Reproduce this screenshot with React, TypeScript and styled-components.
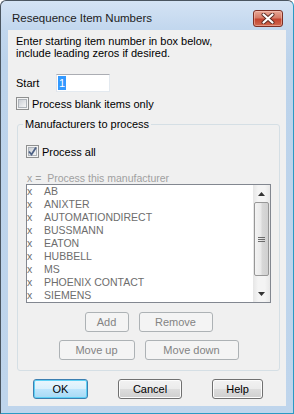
import React from 'react';
import styled, { createGlobalStyle } from 'styled-components';

const GlobalStyle = createGlobalStyle`
  html, body {
    margin: 0;
    padding: 0;
    background: #ffffff;
  }
  body {
    font-family: "Liberation Sans", Arial, sans-serif;
    font-size: 11px;
    color: #000;
  }
`;

const manufacturers = [
  'AB',
  'ANIXTER',
  'AUTOMATIONDIRECT',
  'BUSSMANN',
  'EATON',
  'HUBBELL',
  'MS',
  'PHOENIX CONTACT',
  'SIEMENS',
];

const Window = styled.div`
  box-sizing: border-box;
  width: 294px;
  height: 414px;
  display: flex;
  flex-direction: column;
  border: 1px solid;
  border-color: #4a5560 #2a9ac4 #2a9ac4 #4a5560;
  border-radius: 6px 6px 0 0;
  background: linear-gradient(#d4e3f4, #c2d7ee 28px, #bcd3eb 60px, #bfd5ec);
`;

const TitleBar = styled.div`
  display: flex;
  align-items: flex-start;
  justify-content: space-between;
  height: 29px;
  box-sizing: border-box;
  padding: 9px 10px 0 11px;
`;

const Title = styled.span`
  font-size: 11.5px;
  line-height: 17px;
  color: #1c1c1c;
`;

const CloseButton = styled.div`
  box-sizing: border-box;
  width: 30px;
  height: 17px;
  display: flex;
  align-items: center;
  justify-content: center;
  border: 1px solid #7c2f25;
  border-radius: 3px;
  background: linear-gradient(#e9a897, #d67b67 45%, #c4432f 55%, #d06a50);
  box-shadow: inset 0 0 0 1px rgba(255, 210, 200, 0.45);
`;

const Client = styled.div`
  flex: 1;
  margin: 0 7px 7px 7px;
  display: flex;
  flex-direction: column;
  padding: 5px 6px 0 8px;
  background: #f0f0f0;
`;

const Intro = styled.div`
  line-height: 12px;
`;

const StartRow = styled.div`
  display: flex;
  align-items: center;
  margin-top: 15px;
`;

const Label = styled.span`
  width: 40px;
`;

const TextBox = styled.div`
  box-sizing: border-box;
  width: 54px;
  height: 18px;
  display: flex;
  align-items: center;
  padding-left: 1px;
  background: #fff;
  border: 1px solid;
  border-color: #abadb3 #e3e9ef #e3e9ef #e2e3ea;
`;

const Selected = styled.span`
  background: #3399ff;
  color: #fff;
  line-height: 14px;
  padding: 0 1px;
`;

const CheckRow = styled.label<{ $top: number }>`
  display: flex;
  align-items: center;
  gap: 3px;
  margin-top: ${(p) => p.$top}px;
  height: 13px;
  font-size: 11px;
`;

const Box = styled.span`
  box-sizing: border-box;
  width: 13px;
  height: 13px;
  border: 1px solid #8e8f8f;
  background: #f4f4f4;
  padding: 1px;
  display: flex;
`;

const BoxInner = styled.span`
  flex: 1;
  position: relative;
  border: 1px solid #aeb3b9;
  background: linear-gradient(135deg, #cbcfd5, #f6f6f6);
`;

const Tick = styled.svg`
  position: absolute;
  left: -2px;
  top: -2px;
`;

const Group = styled.fieldset`
  margin: 8px 0 0 1px;
  padding: 0 0 10px 8px;
  border: 1px solid #d5dfe5;
  border-radius: 3px;
  display: flex;
  flex-direction: column;
  min-width: 0;
`;

const Legend = styled.legend`
  margin-left: -3px;
  padding: 0 2px;
  line-height: 12px;
  font-size: 11px;
`;

const ListCaption = styled.div`
  margin-top: 14px;
  line-height: 12px;
  color: #a0a0a0;
  font-size: 10.5px;
  padding-left: 1px;
  white-space: pre;
`;

const ListBox = styled.div`
  box-sizing: border-box;
  width: 245px;
  height: 119px;
  display: flex;
  background: #fff;
  border: 1px solid #828790;
`;

const Items = styled.div`
  flex: 1;
  display: flex;
  flex-direction: column;
`;

const Item = styled.div`
  display: flex;
  height: 13px;
  line-height: 13px;
  color: #6d6d6d;
  font-size: 10.5px;
`;

const Mark = styled.span`
  width: 17px;
`;

const ScrollBar = styled.div`
  width: 17px;
  display: flex;
  flex-direction: column;
  background: linear-gradient(90deg, #e6e6e6, #f4f4f4 30%, #f4f4f4 70%, #e8e8e8);
`;

const ArrowButton = styled.div`
  height: 17px;
  display: flex;
  align-items: center;
  justify-content: center;
`;

const Thumb = styled.div`
  box-sizing: border-box;
  height: 74px;
  margin: 0 0 0 1px;
  width: 15px;
  border: 1px solid #979797;
  border-radius: 2px;
  background: linear-gradient(90deg, #f3f3f3, #e9e9e9 45%, #d8d8d8 55%, #d0d0d0);
  display: flex;
  align-items: center;
  justify-content: center;
`;

const Track = styled.div`
  flex: 1;
`;

const ButtonRow = styled.div<{ $top: number; $gap: number; $width?: number }>`
  display: flex;
  justify-content: center;
  gap: ${(p) => p.$gap}px;
  margin-top: ${(p) => p.$top}px;
  width: ${(p) => (p.$width ? `${p.$width}px` : 'auto')};
`;

const Button = styled.div<{ $width: number; $disabled?: boolean; $default?: boolean }>`
  box-sizing: border-box;
  width: ${(p) => p.$width}px;
  height: 20px;
  display: flex;
  align-items: center;
  justify-content: center;
  font-size: 11px;
  border-radius: 3px;
  border: 1px solid ${(p) => (p.$disabled ? '#adb2b5' : p.$default ? '#3c7fb1' : '#707070')};
  color: ${(p) => (p.$disabled ? '#838383' : '#000')};
  background: ${(p) =>
    p.$disabled
      ? '#f4f4f4'
      : p.$default
      ? 'linear-gradient(#eaf6fd, #d9f0fc 50%, #bee6fd 50%, #a7d9f5)'
      : 'linear-gradient(#f2f2f2, #ebebeb 50%, #dddddd 50%, #cfcfcf)'};
  box-shadow: ${(p) =>
    p.$default ? 'inset 0 0 0 1px #5ed1f5' : p.$disabled ? 'none' : 'inset 0 0 0 1px #fcfcfc'};
`;

const Footer = styled(ButtonRow)`
  margin-top: 8px;
`;

const CheckBox: React.FC<{ checked?: boolean }> = ({ checked }) => (
  <Box>
    <BoxInner>
      {checked && (
        <Tick width="11" height="11" viewBox="0 0 11 11">
          <path d="M2 5.5 L4.5 8.5 L9 1.5" fill="none" stroke="#4d6185" strokeWidth="1.8" />
        </Tick>
      )}
    </BoxInner>
  </Box>
);

const App: React.FC = () => {
  return (
    <>
      <GlobalStyle />
      <Window>
        <TitleBar>
          <Title>Resequence Item Numbers</Title>
          <CloseButton>
            <svg width="14" height="11" viewBox="0 0 14 11">
              <path d="M2.5 1.5 L11.5 9.5 M11.5 1.5 L2.5 9.5" stroke="#5a2a22" strokeWidth="4" strokeLinecap="round" />
              <path d="M2.5 1.5 L11.5 9.5 M11.5 1.5 L2.5 9.5" stroke="#fff" strokeWidth="2.2" strokeLinecap="round" />
            </svg>
          </CloseButton>
        </TitleBar>
        <Client>
          <Intro>
            Enter starting item number in box below,
            <br />
            include leading zeros if desired.
          </Intro>
          <StartRow>
            <Label>Start</Label>
            <TextBox>
              <Selected>1</Selected>
            </TextBox>
          </StartRow>
          <CheckRow $top={5}>
            <CheckBox />
            Process blank items only
          </CheckRow>
          <Group>
            <Legend>Manufacturers to process</Legend>
            <CheckRow $top={15}>
              <CheckBox checked />
              Process all
            </CheckRow>
            <ListCaption>{'x =  Process this manufacturer'}</ListCaption>
            <ListBox>
              <Items>
                {manufacturers.map((m) => (
                  <Item key={m}>
                    <Mark>x</Mark>
                    {m}
                  </Item>
                ))}
              </Items>
              <ScrollBar>
                <ArrowButton>
                  <svg width="7" height="4" viewBox="0 0 7 4">
                    <path d="M3.5 0 L7 4 L0 4 Z" fill="#333" />
                  </svg>
                </ArrowButton>
                <Thumb>
                  <svg width="7" height="7" viewBox="0 0 7 7">
                    <path d="M0 1.5 H7 M0 3.5 H7 M0 5.5 H7" stroke="#6b6b6b" strokeWidth="1" />
                  </svg>
                </Thumb>
                <Track />
                <ArrowButton>
                  <svg width="7" height="4" viewBox="0 0 7 4">
                    <path d="M0 0 L7 0 L3.5 4 Z" fill="#333" />
                  </svg>
                </ArrowButton>
              </ScrollBar>
            </ListBox>
            <ButtonRow $top={9} $gap={10} $width={245}>
              <Button $width={44} $disabled>Add</Button>
              <Button $width={74} $disabled>Remove</Button>
            </ButtonRow>
            <ButtonRow $top={8} $gap={10} $width={245}>
              <Button $width={76} $disabled>Move up</Button>
              <Button $width={94} $disabled>Move down</Button>
            </ButtonRow>
          </Group>
          <Footer $top={8} $gap={30}>
            <Button $width={55} $default>OK</Button>
            <Button $width={64}>Cancel</Button>
            <Button $width={51}>Help</Button>
          </Footer>
        </Client>
      </Window>
    </>
  );
};

export default App;
